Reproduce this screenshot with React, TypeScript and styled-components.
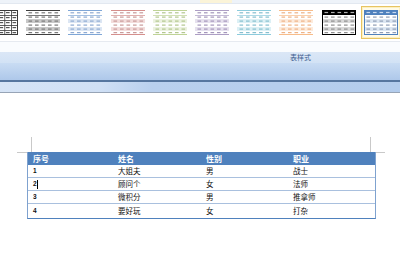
import React from "react";
import styled, { createGlobalStyle } from "styled-components";

const Global = createGlobalStyle`
  html, body { margin: 0; padding: 0; background: #ffffff; }
  body { width: 400px; height: 266px; overflow: hidden; font-family: "Noto Sans CJK SC", "Noto Sans", sans-serif; }
`;

const Shell = styled.div`
  width: 400px;
  height: 266px;
  display: flex;
  flex-direction: column;
  overflow: hidden;
  background: #fff;
`;

const TopStrip = styled.div`
  height: 3px;
  background: linear-gradient(90deg, #eef3f9 0%, #eef3f9 50%, #fbf4d8 50%, #fbf4d8 58%, #eef3f9 58%);
  border-bottom: 1px solid #e2e8f0;
`;

const Gallery = styled.div`
  height: 37px;
  display: flex;
  align-items: center;
  gap: 8.2px;
  margin-left: -16px;
  background: #ffffff;
  border-bottom: 1px solid #e6eaf0;
`;

const ThumbBox = styled.div<{ $selected?: boolean }>`
  flex: 0 0 auto;
  width: 34px;
  height: 25px;
  display: flex;
  align-items: center;
  justify-content: center;
  padding: ${(p) => (p.$selected ? "3px 2px" : "0")};
  margin: ${(p) => (p.$selected ? "0 -3px" : "0")};
  border: ${(p) => (p.$selected ? "1px solid #e7c462" : "none")};
  background: ${(p) => (p.$selected ? "#fffbe8" : "transparent")};
  box-shadow: ${(p) => (p.$selected ? "inset 0 0 0 1px #fdf0c0" : "none")};
`;

const WhiteGap = styled.div`
  height: 10px;
  background: #fafcfe;
`;

const GroupLabel = styled.div`
  height: 11px;
  background: linear-gradient(#dbe7f6, #d2e2f5);
  display: flex;
  align-items: center;
  padding-left: 290px;
  font-size: 7px;
  line-height: 11px;
  color: #3d5d8f;
`;

const BlueBar = styled.div`
  height: 17px;
  background: linear-gradient(#c9dcf3, #aec8ea);
  border-bottom: 2px solid #56769f;
`;

const LowerBar = styled.div`
  height: 10px;
  background: linear-gradient(100deg, #d6e4f6 0%, #d0e0f5 25%, #b9d0ee 38%, #b3ccec 100%);
  border-bottom: 1px solid #97a4b6;
`;

const Page = styled.div`
  flex: 1;
  background: #ffffff;
  padding-top: 44px;
  padding-left: 31px;
`;

const TextArea = styled.div`
  width: 339px;
  display: flex;
  flex-direction: column;
`;

const Marks = styled.div`
  display: flex;
  justify-content: space-between;
  height: 15px;
`;

const Mark = styled.div<{ $side: "left" | "right" }>`
  width: 14px;
  height: 15px;
  border-bottom: 1px solid #c9c9c9;
  ${(p) =>
    p.$side === "left"
      ? "border-right: 1px solid #c9c9c9; margin-left: -14px;"
      : "border-left: 1px solid #c9c9c9; margin-right: -15px;"}
`;

const Table = styled.div`
  margin: 0 -4px 0 -4px;
  width: 347px;
  display: flex;
  flex-direction: column;
  border: 1px solid #4f81bd;
  border-top: none;
  border-left-color: #7fa2cf;
  border-right-color: #7fa2cf;
`;

const Row = styled.div<{ $header?: boolean }>`
  display: grid;
  grid-template-columns: 85px 88px 87px 86px;
  height: ${(p) => (p.$header ? "13px" : "12px")};
  align-items: center;
  background: ${(p) => (p.$header ? "#4f81bd" : "#ffffff")};
  border-bottom: ${(p) => (p.$header ? "none" : "1px solid #a9c0de")};
  &:last-child { border-bottom: none; height: 14px; }
`;

const Cell = styled.div<{ $header?: boolean; $num?: boolean }>`
  padding-left: 5px;
  font-size: ${(p) => (p.$header ? "8px" : p.$num ? "6.5px" : "7.5px")};
  font-weight: ${(p) => (p.$header || p.$num ? 700 : 400)};
  font-family: ${(p) => (p.$num ? '"Liberation Sans", Arial, sans-serif' : '"Noto Sans CJK SC", sans-serif')};
  color: ${(p) => (p.$header ? "#ffffff" : "#111111")};
  line-height: 12px;
  white-space: nowrap;
  display: flex;
  align-items: center;
`;

const Caret = styled.span`
  display: inline-block;
  width: 1px;
  height: 9px;
  background: #000;
  margin-left: 0.5px;
`;

type ThumbKind = "grid" | "light" | "header";
interface ThumbProps {
  kind: ThumbKind;
  c: string;
  b: string;
  d: string;
  hd?: string;
}

const Dashes: React.FC<{ y: number; fill: string }> = ({ y, fill }) => (
  <>
    {[2.5, 9, 15.5, 22, 28.5].map((x) => (
      <rect key={x} x={x} y={y} width={3.6} height={1.2} fill={fill} />
    ))}
  </>
);

const Thumb: React.FC<ThumbProps> = ({ kind, c, b, d, hd }) => {
  if (kind === "grid") {
    return (
      <svg width="34" height="25" viewBox="0 0 34 25">
        <rect x="0.5" y="0.5" width="33" height="24" fill="#fff" stroke={c} />
        {[6.8, 13.6, 20.4, 27.2].map((x) => (
          <rect key={x} x={x} y={0} width={0.8} height={25} fill={c} />
        ))}
        {[5, 10, 15, 20].map((y) => (
          <rect key={y} x={0} y={y} width={34} height={0.8} fill={c} />
        ))}
        {[2, 7, 12, 17, 22].map((y) => (
          <Dashes key={y} y={y} fill={d} />
        ))}
      </svg>
    );
  }
  if (kind === "header") {
    return (
      <svg width="34" height="25" viewBox="0 0 34 25">
        <rect x="0" y="0" width="34" height="25" fill="#fff" />
        <rect x="0" y="0" width="34" height="5" fill={c} />
        <rect x="0" y="9" width="34" height="4" fill={b} />
        <rect x="0" y="17" width="34" height="4" fill={b} />
        <Dashes y={1.9} fill={hd || "#fff"} />
        {[6.5, 10.5, 14.5, 18.5, 22].map((y) => (
          <Dashes key={y} y={y} fill={d} />
        ))}
        <rect x="0.5" y="0.5" width="33" height="24" fill="none" stroke={c} />
      </svg>
    );
  }
  return (
    <svg width="34" height="25" viewBox="0 0 34 25">
      <rect x="0" y="0" width="34" height="25" fill="#fff" />
      <rect x="0" y="0" width="34" height="1" fill={c} />
      <rect x="0" y="9" width="34" height="4" fill={b} />
      <rect x="0" y="17" width="34" height="4" fill={b} />
      <rect x="0" y="5" width="34" height="0.7" fill={c} />
      <Dashes y={2.2} fill={d} />
      {[6.5, 10.5, 14.5, 18.5, 22].map((y) => (
        <Dashes key={y} y={y} fill={d} />
      ))}
      <rect x="0" y="24" width="34" height="1" fill={c} />
    </svg>
  );
};

const thumbs: ThumbProps[] = [
  { kind: "grid", c: "#3a3a3a", b: "#fff", d: "#555" },
  { kind: "light", c: "#3f3f3f", b: "#c8c8c8", d: "#7a7a7a" },
  { kind: "light", c: "#7fa6d6", b: "#dce6f3", d: "#8eaad2" },
  { kind: "light", c: "#d58f8d", b: "#f3dddc", d: "#c99a99" },
  { kind: "light", c: "#bfd397", b: "#ecf2e0", d: "#b3c78e" },
  { kind: "light", c: "#ad9ec4", b: "#e6e1ee", d: "#a496bb" },
  { kind: "light", c: "#8ccbdc", b: "#dcf0f5", d: "#86bfcf" },
  { kind: "light", c: "#f7bc8a", b: "#fdebdc", d: "#eeb285" },
  { kind: "header", c: "#000000", b: "#d9d9d9", d: "#8f8f8f", hd: "#b0b0b0" },
  { kind: "header", c: "#4f81bd", b: "#dce6f2", d: "#8f9db5", hd: "#c7d8ee" },
];

const data = [
  ["1", "大姐夫", "男", "战士"],
  ["2", "顾问个", "女", "法师"],
  ["3", "微积分", "男", "推拿师"],
  ["4", "要好玩", "女", "打杂"],
];

export default function App() {
  return (
    <Shell>
      <Global />
      <TopStrip />
      <Gallery>
        {thumbs.map((t, i) => (
          <ThumbBox key={i} $selected={i === thumbs.length - 1}>
            <Thumb {...t} />
          </ThumbBox>
        ))}
      </Gallery>
      <WhiteGap />
      <GroupLabel>表样式</GroupLabel>
      <BlueBar />
      <LowerBar />
      <Page>
        <TextArea>
          <Marks>
            <Mark $side="left" />
            <Mark $side="right" />
          </Marks>
          <Table>
            <Row $header>
              <Cell $header>序号</Cell>
              <Cell $header>姓名</Cell>
              <Cell $header>性别</Cell>
              <Cell $header>职业</Cell>
            </Row>
            {data.map((r, i) => (
              <Row key={i}>
                <Cell $num>
                  {r[0]}
                  {i === 1 && <Caret />}
                </Cell>
                <Cell>{r[1]}</Cell>
                <Cell>{r[2]}</Cell>
                <Cell>{r[3]}</Cell>
              </Row>
            ))}
          </Table>
        </TextArea>
      </Page>
    </Shell>
  );
}
